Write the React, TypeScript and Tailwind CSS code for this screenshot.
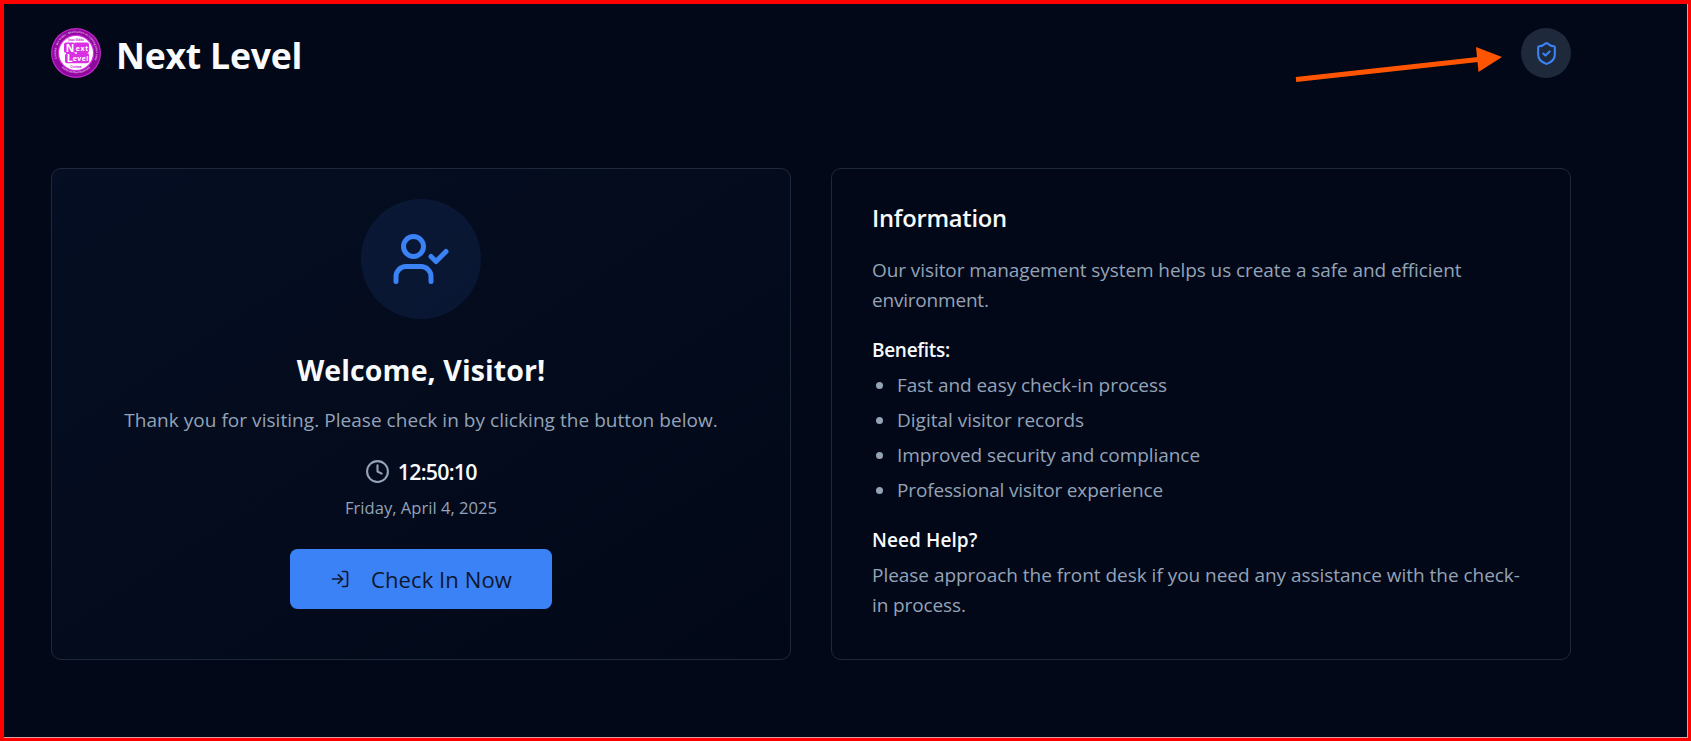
import { Clock, LogIn, ShieldCheck, UserCheck } from "lucide-react";

const benefits = [
  { text: "Fast and easy check-in process", tracking: "tracking-[-0.045px]" },
  { text: "Digital visitor records", tracking: "tracking-[-0.007px]" },
  { text: "Improved security and compliance", tracking: "tracking-[-0.055px]" },
  { text: "Professional visitor experience", tracking: "tracking-[-0.15px]" },
];

function Logo() {
  return (
    <svg viewBox="0 0 50 50" className="size-[50px] shrink-0" fontFamily="'Open Sans', sans-serif">
      <defs>
        <path id="ring-top" d="M6.2 31.5 A20 20 0 1 1 43.8 31.5" />
        <path id="ring-bottom" d="M8.5 37.5 A21.6 21.6 0 0 0 41.5 37.5" />
      </defs>
      <circle cx="25" cy="25" r="25" fill="#c326cf" />
      <circle cx="25" cy="25" r="23.8" fill="#8f0a9c" />
      <circle cx="25" cy="25" r="18.2" fill="#d930e3" />
      <circle cx="25" cy="25" r="17" fill="#ffffff" />
      <text fontSize="2.8" fontWeight="700" fill="#e7a6ec">
        <textPath href="#ring-top" startOffset="1" textLength="76">Cinéma · Jeu Vidéo · Réalisation et Casting pour tous</textPath>
      </text>
      <text fontSize="2.8" fontWeight="700" fill="#e7a6ec">
        <textPath href="#ring-bottom" startOffset="3" textLength="31">Atelier de Divertissement</textPath>
      </text>
      <rect x="13" y="14.5" width="11" height="10.5" rx="2" fill="#d930e3" />
      <rect x="23" y="14.5" width="15" height="10.5" rx="2" fill="#d930e3" />
      <rect x="14" y="25" width="24" height="10.3" rx="2" fill="#d930e3" />
      <circle cx="25" cy="25" r="1" fill="#ffffff" />
      <circle cx="14" cy="25.6" r="1" fill="#ffffff" />
      <text x="25" y="12.6" fontSize="3" fontWeight="700" textAnchor="middle" fill="#c91fd6">Jeux Vidéo</text>
      <text x="25" y="39.6" fontSize="3" fontWeight="700" textAnchor="middle" fill="#c91fd6">Cinéma</text>
      <text x="14.8" y="23.6" fontSize="10.5" fontWeight="700" fill="#ffffff">N</text>
      <text x="24.8" y="22.8" fontSize="7" fontWeight="700" fill="#ffffff" textLength="12.4">ext</text>
      <text x="15.8" y="34" fontSize="10.5" fontWeight="700" fill="#ffffff">L</text>
      <text x="21.8" y="32.8" fontSize="7" fontWeight="700" fill="#ffffff" textLength="15.6">evel</text>
    </svg>
  );
}

function PointerArrow() {
  return (
    <svg viewBox="0 0 210 40" className="pointer-events-none absolute left-[1290px] top-[38px] h-10 w-[210px]">
      <path d="M2 37.4 L184 17.4" stroke="#ff5500" strokeWidth="5" />
      <path d="M182 5 L208 15 L184.5 30 Z" fill="#ff5500" />
    </svg>
  );
}

export default function App() {
  return (
    <div className="relative h-[741px] w-[1691px] overflow-hidden border-4 border-b-[3px] border-r-[3px] border-[#ff0000] bg-[#020817] font-['Open_Sans',sans-serif] text-[19px] leading-[30px] text-[#94a3b8]">
      <div className="flex h-full flex-col border-b border-r border-[#d9a0a0] pl-[47px] pr-[116px] pt-6">
        <header className="flex h-[50px] items-center justify-between">
          <div className="flex items-center gap-[15px]">
            <Logo />
            <h1 className="pt-1 text-[35.6px] font-bold leading-[45px] tracking-[-0.22px] text-slate-50">Next Level</h1>
          </div>
          <button className="flex size-[50px] items-center justify-center rounded-full bg-[#1e293b] text-[#3b82f6]">
            <ShieldCheck size={25} />
          </button>
        </header>

        <main className="mt-[90px] grid h-[492px] grid-cols-2 gap-10">
          <section className="flex flex-col items-center rounded-[10px] border border-[#1e293b] bg-linear-to-br from-[#3b82f6]/5 to-transparent pt-[30px]">
            <div className="flex size-[120px] items-center justify-center rounded-full bg-[#3b82f6]/10 text-[#3b82f6]">
              <UserCheck size={60} />
            </div>
            <h2 className="mt-[31px] text-[28.5px] font-bold leading-[40px] tracking-[0.1px] text-slate-50">
              Welcome, Visitor!
            </h2>
            <p className="mt-[15px] tracking-[0.045px]">
              Thank you for visiting. Please check in by clicking the button below.
            </p>
            <div className="mt-[19px] flex items-center gap-[7.5px]">
              <Clock size={25} />
              <span className="text-[21.4px] font-semibold leading-[35px] tracking-[-0.75px] text-slate-50">12:50:10</span>
            </div>
            <p className="mt-1.5 text-[16.6px] leading-[25px]">Friday, April 4, 2025</p>
            <button className="mt-[29px] flex h-[60px] w-[262px] items-center gap-5 rounded-[7.5px] bg-[#3b82f6] px-10 text-[#0f172a]">
              <LogIn size={20} className="shrink-0" />
              <span className="whitespace-nowrap pl-px text-[22px] font-medium leading-[35px] tracking-[0.1px]">Check In Now</span>
            </button>
          </section>

          <section className="rounded-[10px] border border-[#1e293b] px-10 pt-8">
            <h2 className="text-[23.75px] font-semibold leading-[35px] tracking-[-0.26px] text-slate-50">Information</h2>
            <p className="mt-[19px] tracking-[-0.08px]">
              Our visitor management system helps us create a safe and efficient
              <br />
              <span className="tracking-[-0.2px]">environment.</span>
            </p>
            <h3 className="mt-5 font-semibold tracking-[-0.3px] text-slate-50">Benefits:</h3>
            <ul className="mt-[5px] flex flex-col gap-[5px]">
              {benefits.map((b) => (
                <li key={b.text} className="flex items-center pl-1">
                  <span className="mr-3.5 size-[7px] rounded-full bg-[#94a3b8]" />
                  <span className={b.tracking}>{b.text}</span>
                </li>
              ))}
            </ul>
            <h3 className="mt-5 font-semibold tracking-[0.1px] text-slate-50">Need Help?</h3>
            <p className="mt-[5px] whitespace-nowrap tracking-[-0.032px]">
              Please approach the front desk if you need any assistance with the check-
              <br />
              <span className="tracking-[-0.12px]">in process.</span>
            </p>
          </section>
        </main>
      </div>
      <PointerArrow />
    </div>
  );
}
